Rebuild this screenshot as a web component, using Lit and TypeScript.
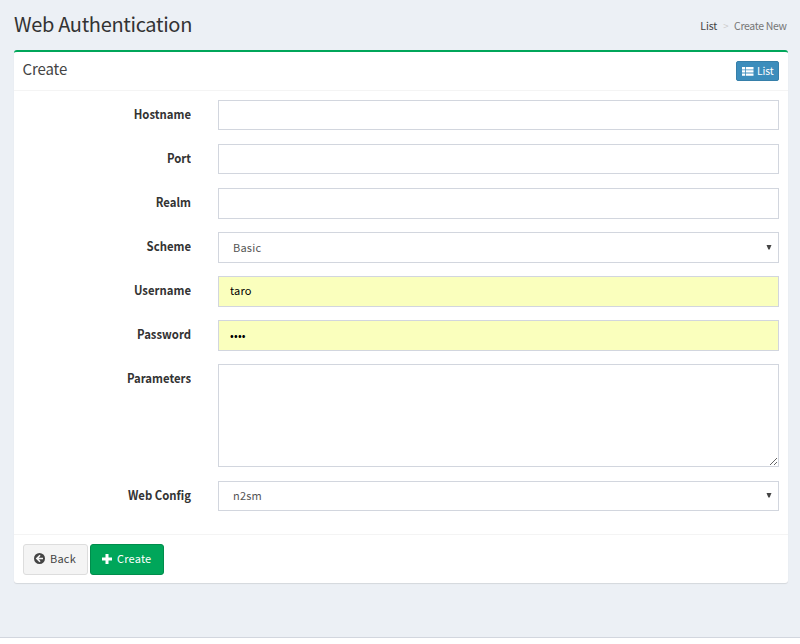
import { LitElement, html, css, svg } from "lit";
import { customElement, property } from "lit/decorators.js";

type Field = { label: string; kind: "text" | "password" | "select" | "area"; value?: string };

const FIELDS: Field[] = [
  { label: "Hostname", kind: "text" },
  { label: "Port", kind: "text" },
  { label: "Realm", kind: "text" },
  { label: "Scheme", kind: "select", value: "Basic" },
  { label: "Username", kind: "text", value: "taro" },
  { label: "Password", kind: "password", value: "taro" },
  { label: "Parameters", kind: "area" },
  { label: "Web Config", kind: "select", value: "n2sm" },
];

@customElement("form-row")
export class FormRow extends LitElement {
  @property({ attribute: false }) field!: Field;

  static styles = css`
    :host { display: grid; grid-template-columns: 169px 561px; column-gap: 27px; align-items: start; }
    label { font-size: 12.4px; font-weight: 700; line-height: 18px; padding-top: 5px; text-align: right; color: #333; transform: scaleX(0.915); transform-origin: right; }
    .control {
      display: block; box-sizing: border-box; width: 100%; height: 30.62px; margin: 0; padding: 5px 11px 6px;
      border: 1px solid #d2d6de; border-radius: 0; background: #fff; outline: none;
      font: 11px/18px "Noto Sans CJK JP", "Open Sans", sans-serif; letter-spacing: 0.2px; color: #555;
    }
    .filled { background: #faffbd; color: #000; }
    .filled[type="text"] { padding: 4px 11px 7px; }
    .area { height: 103px; resize: vertical; }
    .pick { position: relative; }
    select.control { appearance: none; padding: 4.6px 14px 6.4px; }
    .arrow { position: absolute; right: 7px; top: 12.5px; width: 6px; height: 5px; fill: #444; pointer-events: none; }
  `;

  private control() {
    const { kind, value } = this.field;
    if (kind === "select")
      return html`<div class="pick">
        <select class="control"><option>${value}</option></select>
        <svg class="arrow" viewBox="0 0 6 5"><path d="M.5 0h5L3.6 4.6H2.4z" /></svg>
      </div>`;
    if (kind === "area") return html`<textarea class="control area"></textarea>`;
    return html`<input class="control ${value ? "filled" : ""}" type=${kind} .value=${value ?? ""} />`;
  }

  render() {
    return html`<label>${this.field.label}</label>${this.control()}`;
  }
}

const listIcon = svg`<path d="M0 0h3.2v2.4H0zM4 0h7.5v2.4H4zM0 3.2h3.2v2.4H0zM4 3.2h7.5v2.4H4zM0 6.4h3.2v2.4H0zM4 6.4h7.5v2.4H4z"/>`;
const backIcon = svg`<path fill-rule="evenodd" d="M5.5 0a5.5 5.5 0 1 1 0 11a5.5 5.5 0 0 1 0-11zM5.5 1.7L1.7 5.5l3.8 3.8l1.1-1.1L4.8 6.3h4.2V4.7H4.8l1.8-1.9z"/>`;
const plusIcon = svg`<path d="M3.5 0h3v3.5H10v3H6.5V10h-3V6.5H0v-3h3.5z"/>`;

@customElement("app-root")
export class AppRoot extends LitElement {
  static styles = css`
    :host {
      display: flex; flex-direction: column; height: 644px; background: #fff;
      font-family: "Noto Sans CJK JP", "Open Sans", sans-serif; color: #333;
    }
    .content { box-sizing: border-box; height: 638px; padding: 0 12px 0 14px; background: #ecf0f5; border-bottom: 1px solid #d2d6de; }
    .page-head { display: flex; justify-content: space-between; height: 50px; }
    h1 { margin: 0; padding-top: 10px; font-size: 20px; font-weight: 400; line-height: 28px; letter-spacing: -0.33px; white-space: nowrap; }
    .crumbs { display: flex; padding: 18px 1.5px 0 0; font-size: 10.5px; line-height: 16px; letter-spacing: -0.35px; color: #777; white-space: nowrap; }
    .crumbs .root { color: #444; letter-spacing: -0.1px; }
    .sep { padding: 0 6px; color: #ccc; font-size: 9.5px; }
    .box { box-sizing: border-box; height: 533px; border-top: 2px solid #00a65a; border-radius: 3px; background: #fff; box-shadow: 0 1px 1px rgba(0, 0, 0, 0.1); }
    .box-head { box-sizing: border-box; display: flex; justify-content: space-between; height: 39px; padding: 8px 9px 0; border-bottom: 1px solid #f4f4f4; }
    h3 { margin: -1px 0 0 -0.5px; font-size: 15px; font-weight: 400; line-height: 20px; letter-spacing: -0.1px; color: #444; }
    button { box-sizing: border-box; display: flex; align-items: center; margin: 0; border: 1px solid; border-radius: 3px; font-family: inherit; color: #fff; white-space: nowrap; }
    svg { display: block; flex: none; fill: currentColor; }
    .small { width: 43px; height: 20px; margin-top: 1px; padding: 0 5px; gap: 3.5px; background: #3c8dbc; border-color: #367fa9; border-radius: 2px; font-size: 10.4px; line-height: 16px; letter-spacing: -0.1px; }
    .form { box-sizing: border-box; display: flex; flex-direction: column; gap: 13.47px; height: 443px; padding: 8.77px 9px 0 8px; }
    .box-foot { display: flex; gap: 2px; padding: 9px 9px 0; border-top: 1px solid #f4f4f4; }
    .regular { height: 31px; font-size: 11px; line-height: 18px; letter-spacing: 0.2px; }
    .regular span { margin-top: -3px; }
    .regular svg { margin-top: -2px; }
    .back { width: 65px; padding: 0 10px; gap: 5px; background: #f4f4f4; border-color: #ddd; color: #444; }
    .create { width: 74px; padding: 0 11px; gap: 5px; background: #00a65a; border-color: #008d4c; }
  `;

  render() {
    return html`
      <main class="content">
        <header class="page-head">
          <h1>Web Authentication</h1>
          <nav class="crumbs"><span class="root">List</span><span class="sep">&gt;</span><span>Create New</span></nav>
        </header>
        <section class="box">
          <div class="box-head">
            <h3>Create</h3>
            <button class="small"><svg width="11.5" height="9" viewBox="0 0 11.5 9">${listIcon}</svg><span>List</span></button>
          </div>
          <div class="form">${FIELDS.map((f) => html`<form-row .field=${f}></form-row>`)}</div>
          <div class="box-foot">
            <button class="regular back"><svg width="11" height="11" viewBox="0 0 11 11">${backIcon}</svg><span>Back</span></button>
            <button class="regular create"><svg width="10" height="10" viewBox="0 0 10 10">${plusIcon}</svg><span>Create</span></button>
          </div>
        </section>
      </main>
    `;
  }
}
